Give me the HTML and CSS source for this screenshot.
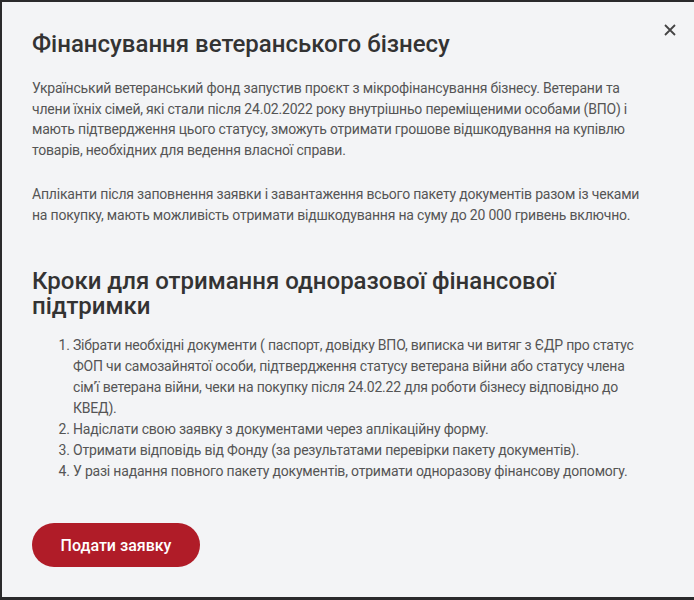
FILE: index.html
```html
<!DOCTYPE html>
<html lang="uk">
<head>
    <meta charset="UTF-8">
    <meta name="viewport" content="width=device-width, initial-scale=1.0">
    <title>Фінансування ветеранського бізнесу</title>
    <link rel="stylesheet" href="styles.css">
</head>
<body>

    <div class="modal">
        <button class="close" aria-label="Закрити">
            <svg width="12" height="12" viewBox="0 0 12 12">
                <path d="M1 1 L11 11 M11 1 L1 11" stroke="#444" stroke-width="1.8" fill="none"/>
            </svg>
        </button>

        <h1>Фінансування ветеранського бізнесу</h1>
        <p>Український ветеранський фонд запустив проєкт з мікрофінансування бізнесу. Ветерани та члени їхніх сімей, які стали після 24.02.2022 року внутрішньо переміщеними особами (ВПО) і мають підтвердження цього статусу, зможуть отримати грошове відшкодування на купівлю товарів, необхідних для ведення власної справи.</p>
        <p>Апліканти після заповнення заявки і завантаження всього пакету документів разом із чеками на покупку, мають можливість отримати відшкодування на суму до 20 000 гривень включно.</p>

        <h2>Кроки для отримання одноразової фінансової підтримки</h2>
        <ol>
            <li>Зібрати необхідні документи ( паспорт, довідку ВПО, виписка чи витяг з ЄДР про статус ФОП чи самозайнятої особи, підтвердження статусу ветерана війни або статусу члена сім’ї ветерана війни, чеки на покупку після 24.02.22 для роботи бізнесу відповідно до КВЕД).</li>
            <li>Надіслати свою заявку з документами через аплікаційну форму.</li>
            <li>Отримати відповідь від Фонду (за результатами перевірки пакету документів).</li>
            <li>У разі надання повного пакету документів, отримати одноразову фінансову допомогу.</li>
        </ol>

        <button class="apply">Подати заявку</button>
    </div>

</body>
</html>
```

FILE: styles.css
```css
body {
    margin: 0;
    background-color: #2a2a2c;
    font-family: Roboto, "Liberation Sans", sans-serif;
}
.modal {
    position: relative;
    margin: 2px 0 0 2px;
    height: 595px;
    box-sizing: border-box;
    padding: 28px 40px 0 30px;
    background-color: #f3f4f6;
    color: #555;
}
.close {
    position: absolute;
    top: 22px;
    right: 18px;
    border: none;
    background: none;
    padding: 0;
    cursor: pointer;
}
h1, h2 {
    margin: 0;
    color: #333;
    font-weight: 500;
    font-size: 24px;
    line-height: 28px;
}
p {
    margin: 20px 0 24px;
    font-size: 14px;
    line-height: 20.5px;
    letter-spacing: -0.2px;
}
p + p {
    margin-top: 0;
}
h2 {
    margin-top: 44px;
    line-height: 25px;
}
ol {
    margin: 16px 0 0;
    padding-left: 41px;
    font-size: 14px;
    line-height: 21px;
    letter-spacing: -0.2px;
}
.apply {
    margin-top: 41px;
    width: 168px;
    height: 44px;
    border: none;
    border-radius: 22px;
    background-color: #b01c28;
    color: #fff;
    font-family: Roboto, "Liberation Sans", sans-serif;
    font-size: 16px;
    font-weight: 500;
    cursor: pointer;
}
```
